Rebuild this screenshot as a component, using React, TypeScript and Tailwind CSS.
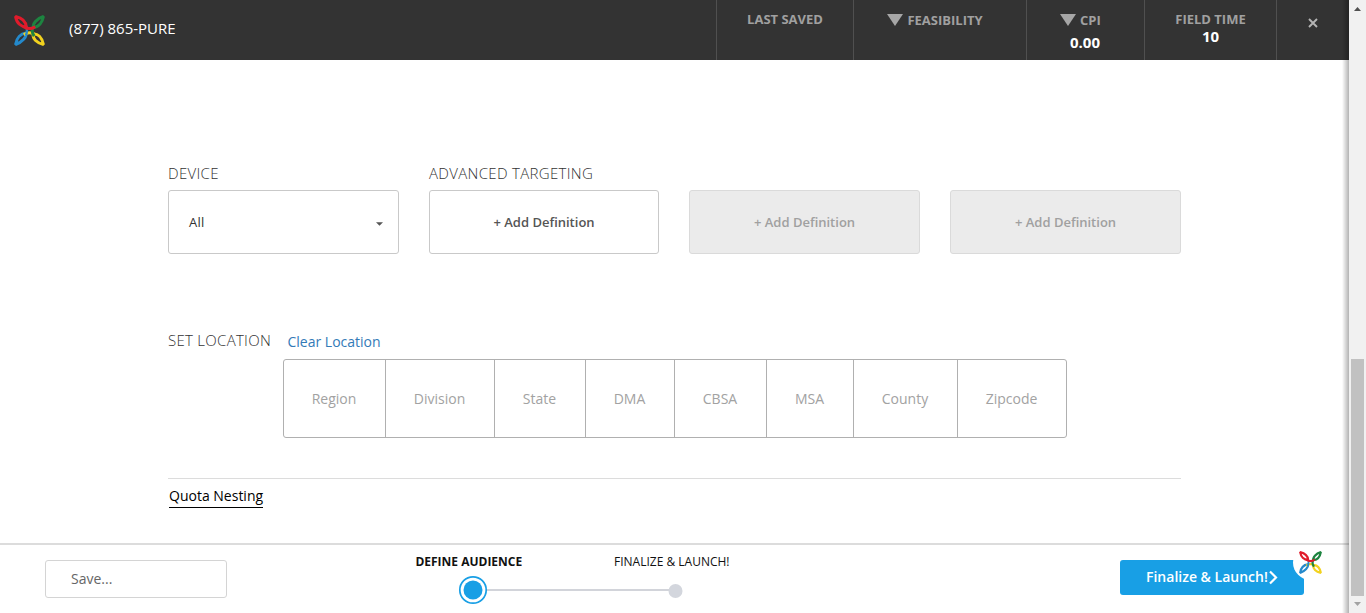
import React from "react";

const font = "font-['Open_Sans','Noto_Sans',sans-serif]";

function Logo({ className }: { className: string }) {
  return (
    <svg viewBox="0 0 30 30" fill="none" strokeWidth="2.9" strokeLinejoin="bevel" className={className}>
      <path d="M1.5 28.5C2.500 22 6.500 18 11.500 17.500C12.500 21 8 26.500 1.500 28.500Z" stroke="#2489cb" />
      <path d="M28.5 28.5C22 27 18 23 18.500 18.500C23 18 27 21.500 28.500 28.500Z" stroke="#f2d21f" />
      <path d="M9.500 19Q15 15.500 20.500 19" stroke="#f2d21f" />
      <path d="M28.5 1.5C27.500 7 24 11.500 19 12C17.500 8.500 22 3.500 28.500 1.500Z" stroke="#1d8440" />
      <path d="M19 10C17 14 17 17 19.500 20.500" stroke="#1d8440" />
      <path d="M11.300 9.500C13 13 13 16 11.500 20" stroke="#2489cb" strokeWidth="2.3" />
      <path d="M1.5 1.5C8 3 11.500 6.500 11.800 11.500C7 11.500 2.500 8 1.500 1.500Z" stroke="#e01b2b" />
      <path d="M9.500 11.300Q15 15 20.500 11.300" stroke="#e01b2b" />
    </svg>
  );
}

function Down() {
  return (
    <svg viewBox="0 0 16 12" className="mr-1 h-3 w-4" fill="#a6a6a6">
      <path d="M0 0H16L8 12Z" />
    </svg>
  );
}

const locations = [
  { name: "Region", width: "w-[102px]" },
  { name: "Division", width: "w-[109px]" },
  { name: "State", width: "w-[91px]" },
  { name: "DMA", width: "w-[89px]" },
  { name: "CBSA", width: "w-[92px]" },
  { name: "MSA", width: "w-[87px]" },
  { name: "County", width: "w-[104px]" },
  { name: "Zipcode", width: "w-[108px]" },
];

function Header() {
  return (
    <header className="flex h-[60px] shrink-0 bg-[#333] text-[13px] leading-[18px] font-bold text-[#a0a0a0]">
      <div className="flex w-[716px] shrink-0">
        <Logo className="mt-[15px] ml-[14px] h-[31px] w-[31px]" />
        <span className="mt-[18px] ml-[24px] text-[15px] leading-5 font-normal text-white">(877) 865-PURE</span>
      </div>
      <div className="w-[137px] border-l border-[#505050] pt-[10px] text-center">LAST SAVED</div>
      <div className="flex w-[173px] items-start justify-center border-l border-[#505050] pt-[11px] pr-[10px]">
        <span className="mt-[3px]"><Down /></span>
        <span>FEASIBILITY</span>
      </div>
      <div className="w-[118px] border-l border-[#505050] pt-[11px]">
        <div className="flex items-start pl-[33px]">
          <span className="mt-[3px]"><Down /></span>
          <span>CPI</span>
        </div>
        <div className="mt-1 pl-[43px] text-[15px] text-white">0.00</div>
      </div>
      <div className="w-[132px] border-l border-[#505050] pt-[10px] text-center">
        <div>FIELD TIME</div>
        <div className="-mt-px text-[15px] text-white">10</div>
      </div>
      <div className="w-[73px] border-l border-[#505050] pt-[18px] pl-[31px]">
        <svg viewBox="0 0 10 10" className="h-[10px] w-[10px]" stroke="#b4b4b4" strokeWidth="1.9">
          <path d="M1 1L9 9M9 1L1 9" />
        </svg>
      </div>
    </header>
  );
}

function Footer() {
  return (
    <footer className="flex h-[70px] shrink-0 border-t-2 border-[#dcdcdc]">
      <div className="mt-[15px] ml-[45px] h-[38px] w-[182px] rounded-[3px] border border-[#d4d4d4] pl-[25px] text-sm leading-9 text-[#666]">
        Save...
      </div>
      <div className="ml-[188px] w-[330px] pt-[9px] text-xs leading-4 text-[#111]">
        <div className="flex whitespace-nowrap">
          <span className="w-[199px] pl-[0.4px] font-bold">DEFINE AUDIENCE</span>
          <span>FINALIZE &amp; LAUNCH!</span>
        </div>
        <svg viewBox="0 0 330 36" className="h-9 w-[330px]">
          <path d="M72 20H254" stroke="#d2d4da" strokeWidth="2" />
          <circle cx="58" cy="20" r="13.2" fill="#fff" stroke="#189fe5" strokeWidth="1.7" />
          <circle cx="58" cy="20" r="9.5" fill="#189fe5" />
          <circle cx="260.5" cy="21" r="7" fill="#d3d6dd" />
        </svg>
      </div>
      <div className="relative mt-[15px] ml-[375px] flex h-[35px] w-[184px] rounded-[3px] bg-[#189fe5] pl-[26px] text-sm leading-[34px] font-semibold whitespace-nowrap text-white">
        Finalize &amp; Launch!
        <svg viewBox="0 0 9 15" className="mt-[10px] ml-px h-[15px] w-[9px]" fill="none" stroke="white" strokeWidth="2.2">
          <path d="M1 1.5L7 7.5L1 13.5" />
        </svg>
        <div className="absolute -top-[15px] left-[173px] flex h-[35px] w-[35px] items-center justify-center rounded-full bg-white">
          <Logo className="h-[23px] w-[23px]" />
        </div>
      </div>
    </footer>
  );
}

function Scrollbar() {
  return (
    <aside className="flex w-[17px] shrink-0 flex-col items-center bg-[#f1f1f1]">
      <svg viewBox="0 0 17 17" className="h-[17px] w-[17px]" fill="#505050"><path d="M5 11L8.500 7L12 11Z" /></svg>
      <div className="mt-[342px] h-[237px] w-[13px] bg-[#c1c1c1]" />
      <svg viewBox="0 0 17 17" className="h-[17px] w-[17px]" fill="#a3a3a3"><path d="M5 6L8.500 10L12 6Z" /></svg>
    </aside>
  );
}

export default function App() {
  return (
    <div className={`flex h-[613px] w-[1366px] overflow-hidden bg-white ${font}`}>
      <div className="relative flex w-[1349px] flex-col">
        <Header />
        <main className="flex-1 pt-[103px] pl-[168px]">
          <div className="flex text-[15px] leading-5 font-light tracking-[0.32px] text-[#333]">
            <span className="w-[261px]">DEVICE</span>
            <span>ADVANCED TARGETING</span>
          </div>
          <div className="mt-[7px] grid h-16 w-[1013px] grid-cols-[231px_230px_231px_231px] gap-[30px] text-[13px] font-semibold">
            <div className="flex items-center justify-between rounded-[3px] border border-[#c9c9c9] pt-0.5 pr-[15px] pl-5 font-medium text-[#333]">
              <span className="tracking-[0.2px]">All</span>
              <svg viewBox="0 0 8 4" className="mt-0.5 h-1 w-[7px]" fill="#555"><path d="M0 0H8L4 4Z" /></svg>
            </div>
            <div className="flex items-center justify-center rounded-[3px] border border-[#c9c9c9] pt-0.5 text-[#555]">+ Add Definition</div>
            <div className="flex items-center justify-center rounded-[3px] border border-[#dadada] bg-[#ebebeb] pt-0.5 text-[#a0a0a0]">+ Add Definition</div>
            <div className="flex items-center justify-center rounded-[3px] border border-[#dadada] bg-[#ebebeb] pt-0.5 text-[#a0a0a0]">+ Add Definition</div>
          </div>
          <div className="mt-[76px] flex">
            <span className="w-[119.5px] text-[15px] leading-5 font-light tracking-[0.28px] text-[#333]">SET LOCATION</span>
            <span className="mt-[2px] text-sm leading-5 text-[#337ab7]">Clear Location</span>
          </div>
          <div className="mt-[7px] ml-[115px] flex h-[79px] w-[784px] rounded-[3px] border border-[#b0b0b0] text-sm text-[#a2a2a2]">
            {locations.map((l, i) => (
              <div key={l.name} className={`flex shrink-0 items-center justify-center pr-px ${l.width} ${i < 7 ? "border-r border-[#b0b0b0]" : ""}`}>
                {l.name}
              </div>
            ))}
          </div>
          <div className="mt-10 flex w-[1013px] border-t border-[#dcdcdc] pt-[7px] pl-px">
            <span className="h-[22px] border-b border-black text-sm leading-5 text-black">Quota Nesting</span>
          </div>
        </main>
        <Footer />
        <div className="absolute top-0 right-0 h-full w-[7px] bg-linear-to-r from-black/0 to-black/30" />
      </div>
      <Scrollbar />
    </div>
  );
}
